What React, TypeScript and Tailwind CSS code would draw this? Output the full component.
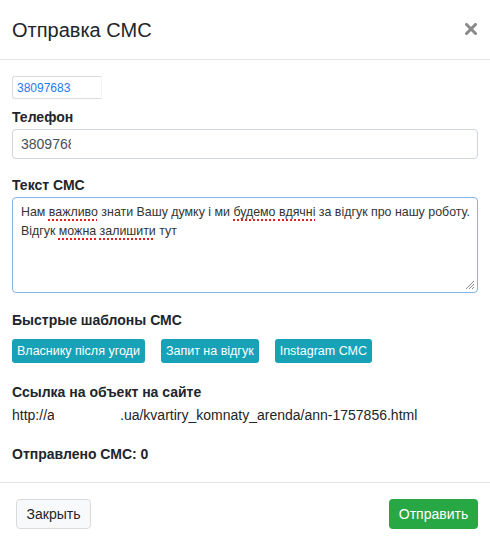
import React from "react";

const sq = "underline decoration-dotted decoration-[#e02020] decoration-2 underline-offset-[3px]";

export default function App() {
  return (
    <div className="w-[490px] h-[538px] bg-white text-[#212529] overflow-hidden" style={{ fontFamily: '"Liberation Sans", Arial, sans-serif' }}>
      <div className="h-[60px] border-b border-[#e5e5e5] flex items-center justify-between pl-[12px] pr-[13px]">
        <div className="text-[20px] leading-[24px] pt-[1px]">Отправка СМС</div>
        <svg width="12" height="12" viewBox="0 0 12 12" className="mb-[2px]">
          <path d="M1.5 1.5 L10.5 10.5 M10.5 1.5 L1.5 10.5" stroke="#8a8a8a" strokeWidth="3" strokeLinecap="square" />
        </svg>
      </div>
      <div className="px-[12px] pt-[16px]">
        <div className="w-[90px] h-[23px] border border-[#dcdcdc] border-r-[#f4f4f4] rounded-l-[3px] flex items-center pl-[4px] text-[12px] text-[#1a7cf0]">38097683</div>
        <div className="mt-[8px] text-[14px] leading-[20px] font-bold">Телефон</div>
        <div className="mt-[2px] h-[30px] border border-[#cfd4d9] rounded-[4px] flex items-center pl-[8px] text-[14px] text-[#495057]">
          <span className="inline-block overflow-hidden whitespace-nowrap w-[50px]">38097683</span>
        </div>
        <div className="mt-[16px] text-[14px] leading-[20px] font-bold">Текст СМС</div>
        <div className="relative mt-[2px] h-[96px] border border-[#80b5ec] rounded-[4px] pl-[8px] pr-[4px] pt-[5px] text-[12.4px] leading-[19px] text-[#333]">
          <div className="whitespace-nowrap">
            Нам <span className={sq}>важливо</span> знати Вашу думку і ми <span className={sq}>будемо</span> <span className={sq}>вдячні</span> за відгук про нашу роботу.
          </div>
          <div className="whitespace-nowrap">
            Відгук <span className={sq}>можна</span> <span className={sq}>залишити</span> тут
          </div>
          <svg width="10" height="10" viewBox="0 0 10 10" className="absolute right-[2px] bottom-[2px]">
            <path d="M9 1 L1 9 M9 4 L4 9 M9 7 L7 9" stroke="#8a8a8a" strokeWidth="1" />
          </svg>
        </div>
        <div className="mt-[17px] text-[14px] leading-[20px] font-bold">Быстрые шаблоны СМС</div>
        <div className="mt-[9px] flex gap-[16px]">
          <div className="h-[24px] px-[5px] rounded-[3px] bg-[#17a2b8] text-white text-[12.5px] flex items-center">Власнику після угоди</div>
          <div className="h-[24px] px-[5px] rounded-[3px] bg-[#17a2b8] text-white text-[12.5px] flex items-center">Запит на відгук</div>
          <div className="h-[24px] px-[5px] rounded-[3px] bg-[#17a2b8] text-white text-[12.5px] flex items-center">Instagram СМС</div>
        </div>
        <div className="mt-[19px] text-[14px] leading-[20px] font-bold">Ссылка на объект на сайте</div>
        <div className="mt-[3px] text-[14px] leading-[20px] whitespace-nowrap flex">
          <span className="inline-block overflow-hidden w-[42px]">http://avizo</span>
          <span className="inline-block w-[66px]"></span>
          <span>.ua/kvartiry_komnaty_arenda/ann-1757856.html</span>
        </div>
        <div className="mt-[19px] text-[14px] leading-[20px] font-bold">Отправлено СМС: 0</div>
      </div>
      <div className="mt-[18px] border-t border-[#e5e5e5] pt-[16px] pl-[16px] pr-[12px] flex justify-between">
        <div className="h-[30px] w-[75px] border border-[#dadada] rounded-[4px] bg-[#f8f9fa] text-[14px] text-[#212529] flex items-center justify-center">Закрыть</div>
        <div className="h-[30px] w-[89px] rounded-[4px] bg-[#28a745] text-[14px] text-white flex items-center justify-center">Отправить</div>
      </div>
    </div>
  );
}
